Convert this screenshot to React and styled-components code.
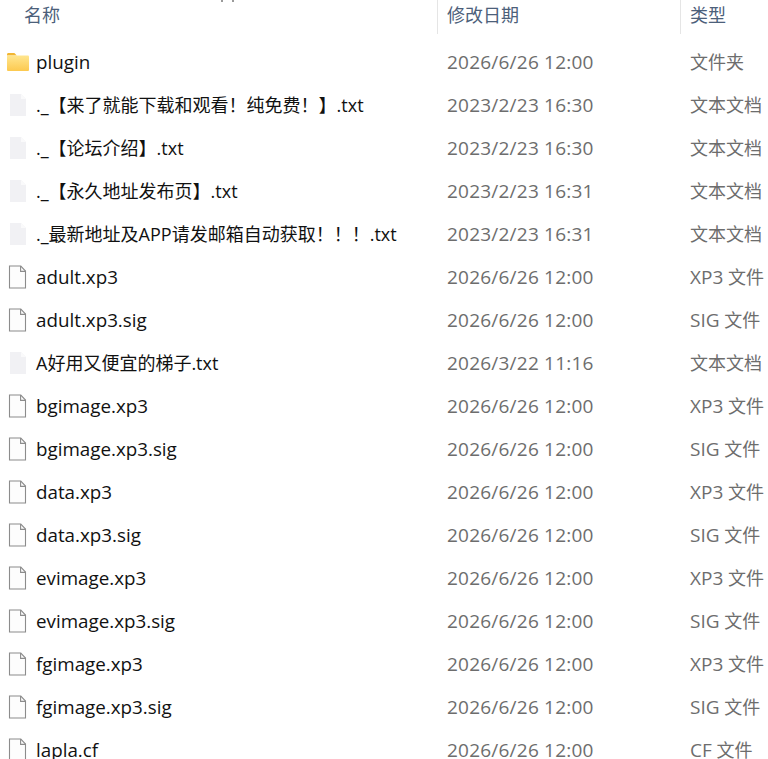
import React from "react";
import styled, { createGlobalStyle } from "styled-components";

const GlobalStyle = createGlobalStyle`
  html, body {
    margin: 0;
    padding: 0;
    background: #fff;
    overflow: hidden;
  }
  body {
    font-family: "Open Sans", "Noto Sans CJK SC", sans-serif;
  }
`;

const Page = styled.div`
  position: relative;
  width: 768px;
  height: 759px;
  overflow: hidden;
  background: #fff;
`;

/* bit of a glyph from the row scrolled out above the header */
const ClippedGlyph = styled.div`
  position: absolute;
  top: 0;
  left: 221px;
  width: 9px;
  height: 2px;
  border-left: 2px solid #9a9a9a;
  border-right: 2px solid #9a9a9a;
`;

const Header = styled.div`
  display: grid;
  grid-template-columns: 437px 243px 1fr;
  height: 34px;
  margin-bottom: 6px;
`;

const HeaderCell = styled.div`
  height: 34px;
  padding-left: ${(p) => p.$pad}px;
  box-sizing: border-box;
  font-size: 18px;
  line-height: 31px;
  color: #4c607a;
  border-left: ${(p) => (p.$line ? "1px solid #e5e5e5" : "none")};
`;

const List = styled.div`
  display: flex;
  flex-direction: column;
`;

const Row = styled.div`
  display: grid;
  grid-template-columns: 437px 243px 1fr;
  height: 43px;
  align-items: center;
  white-space: nowrap;
  line-height: 26px;
`;

const NameCell = styled.div`
  display: flex;
  align-items: center;
  padding-left: 6px;
`;

const IconSlot = styled.div`
  width: 30px;
  height: 26px;
  display: flex;
  align-items: center;
`;

const Name = styled.span`
  font-size: ${(p) => (p.$latin ? 18.8 : 18)}px;
  color: #111;
`;

const DateCell = styled.div`
  padding-left: 10px;
  font-size: 19px;
  letter-spacing: 0.22px;
  color: #6d6d6d;
`;

const TypeCell = styled.div`
  padding-left: 10px;
  font-size: 18px;
  color: #6d6d6d;
`;

const Ext = styled.span`
  font-size: 19px;
`;

const FolderIcon = () => (
  <svg width="24" height="22" viewBox="0 0 24 22">
    <defs>
      <linearGradient id="folderFill" x1="0" y1="0" x2="0" y2="1">
        <stop offset="0" stopColor="#ffe68f" />
        <stop offset="1" stopColor="#fcc94f" />
      </linearGradient>
    </defs>
    <path d="M1 3.5C1 2.7 1.6 2 2.4 2h6l2.4 2.6H1z" fill="#f2b632" />
    <rect x="1" y="4.4" width="22" height="15.6" rx="1" fill="url(#folderFill)" />
  </svg>
);

const PlainFileIcon = () => (
  <svg width="22" height="24" viewBox="0 0 22 24">
    <path d="M3.5 1h11.3l4.7 5v17h-16z" fill="#fdfdfd" stroke="#8c8c8c" strokeWidth="1.1" />
    <path d="M14.6 1v5.4h5" fill="none" stroke="#8c8c8c" strokeWidth="1.1" />
  </svg>
);

const TextFileIcon = () => (
  <svg width="22" height="24" viewBox="0 0 22 24">
    <path d="M4 1h11l5 5v17H4z" fill="#f1f1f4" />
    <path d="M15 1v5h5z" fill="#fafafb" />
  </svg>
);

const icons = { folder: FolderIcon, plain: PlainFileIcon, text: TextFileIcon };

const rows = [
  ["folder", "plugin", "2026/6/26 12:00", "", "文件夹"],
  ["text", "._【来了就能下载和观看！纯免费！】.txt", "2023/2/23 16:30", "", "文本文档"],
  ["text", "._【论坛介绍】.txt", "2023/2/23 16:30", "", "文本文档"],
  ["text", "._【永久地址发布页】.txt", "2023/2/23 16:31", "", "文本文档"],
  ["text", "._最新地址及APP请发邮箱自动获取！！！.txt", "2023/2/23 16:31", "", "文本文档"],
  ["plain", "adult.xp3", "2026/6/26 12:00", "XP3", " 文件"],
  ["plain", "adult.xp3.sig", "2026/6/26 12:00", "SIG", " 文件"],
  ["text", "A好用又便宜的梯子.txt", "2026/3/22 11:16", "", "文本文档"],
  ["plain", "bgimage.xp3", "2026/6/26 12:00", "XP3", " 文件"],
  ["plain", "bgimage.xp3.sig", "2026/6/26 12:00", "SIG", " 文件"],
  ["plain", "data.xp3", "2026/6/26 12:00", "XP3", " 文件"],
  ["plain", "data.xp3.sig", "2026/6/26 12:00", "SIG", " 文件"],
  ["plain", "evimage.xp3", "2026/6/26 12:00", "XP3", " 文件"],
  ["plain", "evimage.xp3.sig", "2026/6/26 12:00", "SIG", " 文件"],
  ["plain", "fgimage.xp3", "2026/6/26 12:00", "XP3", " 文件"],
  ["plain", "fgimage.xp3.sig", "2026/6/26 12:00", "SIG", " 文件"],
  ["plain", "lapla.cf", "2026/6/26 12:00", "CF", " 文件"],
];

const isLatin = (s) => /^[\x00-\x7f]+$/.test(s);

export default function App() {
  return (
    <Page>
      <GlobalStyle />
      <ClippedGlyph />
      <Header>
        <HeaderCell $pad={24}>名称</HeaderCell>
        <HeaderCell $pad={9} $line>修改日期</HeaderCell>
        <HeaderCell $pad={9} $line>类型</HeaderCell>
      </Header>
      <List>
        {rows.map(([icon, name, date, ext, type]) => {
          const Icon = icons[icon];
          return (
            <Row key={name}>
              <NameCell>
                <IconSlot>
                  <Icon />
                </IconSlot>
                <Name $latin={isLatin(name)}>{name}</Name>
              </NameCell>
              <DateCell>{date}</DateCell>
              <TypeCell>
                {ext && <Ext>{ext}</Ext>}
                {type}
              </TypeCell>
            </Row>
          );
        })}
      </List>
    </Page>
  );
}
